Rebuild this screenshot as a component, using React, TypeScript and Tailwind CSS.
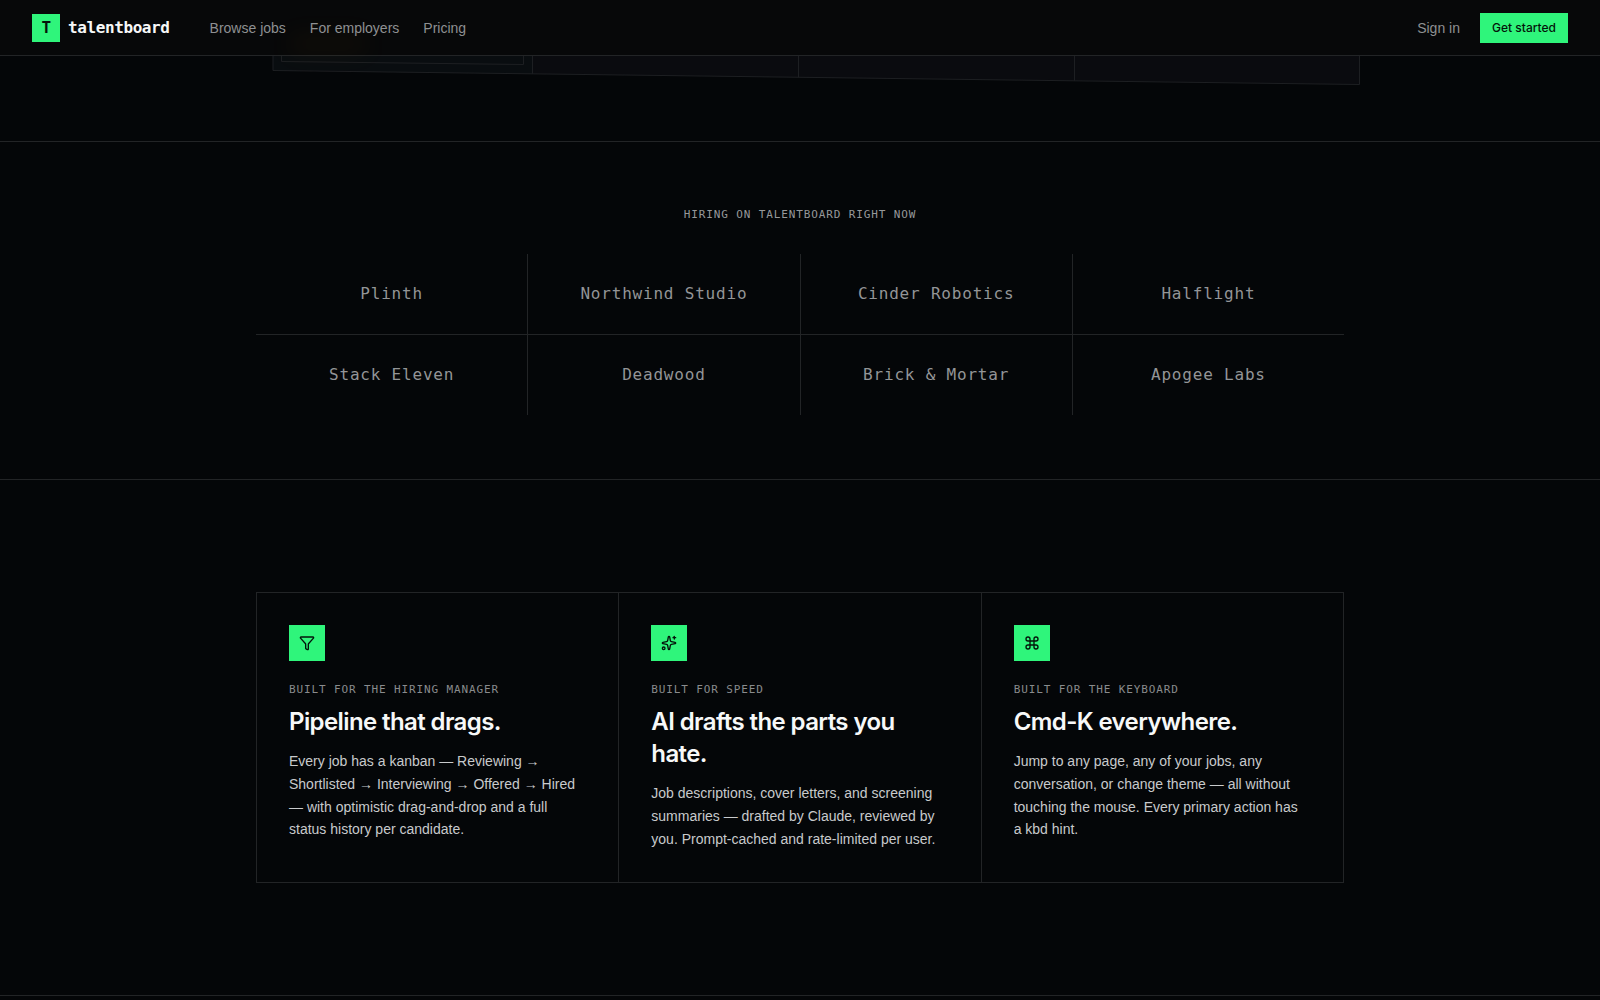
import { Command, Filter, Sparkles } from "lucide-react";

const navLinks = ["Browse jobs", "For employers", "Pricing"];

const companies = [
  "Plinth",
  "Northwind Studio",
  "Cinder Robotics",
  "Halflight",
  "Stack Eleven",
  "Deadwood",
  "Brick & Mortar",
  "Apogee Labs",
];

const features = [
  {
    icon: Filter,
    eyebrow: "Built for the hiring manager",
    title: "Pipeline that drags.",
    body: "Every job has a kanban — Reviewing → Shortlisted → Interviewing → Offered → Hired — with optimistic drag-and-drop and a full status history per candidate.",
  },
  {
    icon: Sparkles,
    eyebrow: "Built for speed",
    title: "AI drafts the parts you hate.",
    body: "Job descriptions, cover letters, and screening summaries — drafted by Claude, reviewed by you. Prompt-cached and rate-limited per user.",
  },
  {
    icon: Command,
    eyebrow: "Built for the keyboard",
    title: "Cmd-K everywhere.",
    body: "Jump to any page, any of your jobs, any conversation, or change theme — all without touching the mouse. Every primary action has a\u00a0kbd hint.",
  },
];

function Header() {
  return (
    <header className="relative flex h-14 items-center justify-between border-b border-[#222426] bg-[#070809] px-8">
      {/* warm card glow behind the bar */}
      <div className="absolute top-9 left-72 h-4 w-20 rounded-full bg-amber-500/5 blur-md" />

      <div className="relative flex items-center gap-10">
        <a
          href="#"
          className="flex items-center gap-2 font-['DejaVu_Sans_Mono','Liberation_Mono',monospace] text-base font-bold tracking-tight text-[#f7f8f8]"
        >
          <span className="flex size-7 items-center justify-center bg-[#2ff57b] text-[#04140a]">
            T
          </span>
          talentboard
        </a>
        <nav className="flex items-center gap-6 font-['Liberation_Sans',Arial,sans-serif] text-sm text-[#8e9092]">
          {navLinks.map((link) => (
            <a key={link} href="#">
              {link}
            </a>
          ))}
        </nav>
      </div>

      <div className="relative flex items-center gap-5">
        <a
          href="#"
          className="font-['Liberation_Sans',Arial,sans-serif] text-sm text-[#8e9092]"
        >
          Sign in
        </a>
        <button
          type="button"
          className="bg-[#2ff57b] px-3 py-[7px] text-xs font-medium text-[#04140a]"
        >
          Get started
        </button>
      </div>
    </header>
  );
}

// bottom edge of the tilted kanban board
function BoardEdge() {
  return (
    <svg
      width="1120"
      height="36"
      viewBox="0 0 1120 36"
      fill="none"
      className="shrink-0"
      aria-hidden="true"
    >
      <path d="M33 -4V14.5L1119.5 28.5V-4Z" fill="#0a0b0f" />
      <path d="M33 -4V14.5L292.5 17.8V-4Z" fill="#090d10" />
      <g stroke="#1d1f22">
        <path d="M33 -4V14.5L1119.5 28.5V-4" />
        <path d="M41.5 -4V5.5L283.5 8.5V-4" />
        <path d="M292.5 -4V17.8M558.5 -4V21.3M834.5 -4V24.8" />
      </g>
    </svg>
  );
}

function Companies() {
  return (
    <section className="border-y border-[#222426] px-8 py-16">
      <div className="mx-auto max-w-[1088px]">
        <p className="mb-[30px] text-center font-['DejaVu_Sans_Mono','Liberation_Mono',monospace] text-[11px] leading-[18px] tracking-[0.08em] text-[#96989a] uppercase">
          Hiring on talentboard right now
        </p>
        <div className="grid grid-cols-4 gap-px bg-[#222426]">
          {companies.map((company) => (
            <div
              key={company}
              className="bg-[#040608] py-7 text-center font-['DejaVu_Sans_Mono','Liberation_Mono',monospace] text-base tracking-wider text-[#939597]"
            >
              {company}
            </div>
          ))}
        </div>
      </div>
    </section>
  );
}

function Features() {
  return (
    <section className="border-b border-[#222426] px-8 py-28">
      <div className="mx-auto grid max-w-[1088px] grid-cols-3 gap-px border border-[#222426] bg-[#222426]">
        {features.map(({ icon: Icon, eyebrow, title, body }) => (
          <article key={title} className="bg-[#040608] p-8">
            <div className="flex size-9 items-center justify-center bg-[#2ff57b] text-[#04140a]">
              <Icon size={16} strokeWidth={2} />
            </div>
            <p className="mt-5 font-['DejaVu_Sans_Mono','Liberation_Mono',monospace] text-[11px] leading-[17px] tracking-[0.08em] text-[#898b8d] uppercase">
              {eyebrow}
            </p>
            <h3 className="mt-2 text-2xl font-semibold tracking-tight text-[#f7f8f8]">
              {title}
            </h3>
            <p className="mt-3 font-['Liberation_Sans',Arial,sans-serif] text-sm leading-relaxed text-[#c8cacc]">
              {body}
            </p>
          </article>
        ))}
      </div>
    </section>
  );
}

export default function App() {
  return (
    <div className="min-h-screen bg-[#040608] font-['Inter','Liberation_Sans',sans-serif] antialiased">
      <Header />
      <div className="flex h-[85px] justify-center overflow-hidden">
        <BoardEdge />
      </div>
      <Companies />
      <Features />
    </div>
  );
}
